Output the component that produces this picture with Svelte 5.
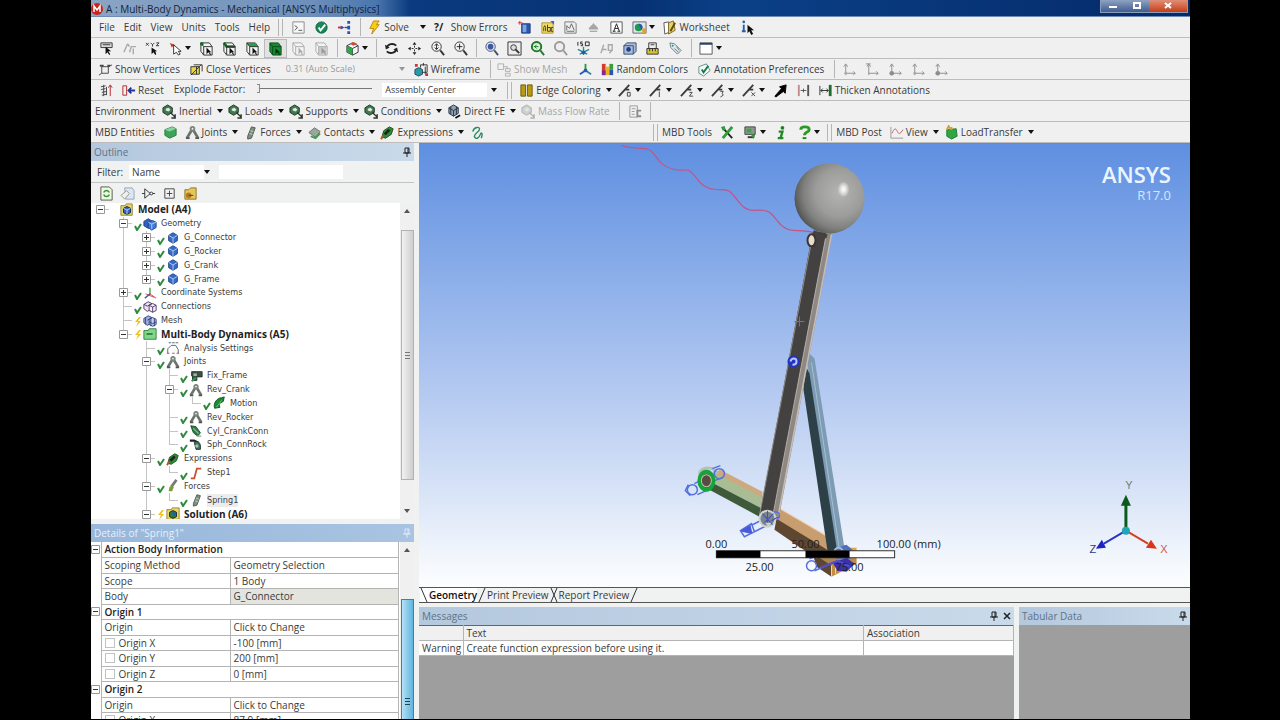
<script lang="ts">
	type Item = {
		kind: 'menu' | 'tool' | 'cmd' | 'split' | 'caret' | 'sep' | 'grip' | 'label' | 'scale' | 'explode' | 'center';
		icon?: string;
		text?: string;
		drop?: boolean;
		off?: boolean;
		on?: boolean;
	};

	const menu = (text: string): Item => ({ kind: 'menu', text });
	const tool = (icon: string, on = false): Item => ({ kind: 'tool', icon, on });
	const cmd = (icon: string, text: string, off = false): Item => ({ kind: 'cmd', icon, text, off });
	const drop = (icon: string, text: string): Item => ({ kind: 'cmd', icon, text, drop: true });
	const split = (icon: string): Item => ({ kind: 'split', icon });
	const label = (text: string): Item => ({ kind: 'label', text });
	const sep: Item = { kind: 'sep' };
	const grip: Item = { kind: 'grip' };

	const cube = (fill: string, line = '#222') =>
		`<path d="M2 5l6-3 6 3v7l-6 3-6-3z" fill="${fill}" stroke="${line}"/><path d="M2 5l6 3 6-3M8 8v7" fill="none" stroke="${line}"/>`;
	const selectBox = (faces: string, line = '#2c352f', pointer = '#111') =>
		`<path d="M2 2h9l3 4v9H5L2 11z" fill="#f4f4f4" stroke="${line}"/>${faces}<path d="M2 2l3 4h9M5 6v9" fill="none" stroke="${line}"/><path d="M8 7v7l2-2 2 3 1-1-2-2h2z" fill="${pointer}"/>`;
	const lens = (line: string, fill: string, inner = '') =>
		`<circle cx="7" cy="6" r="5" fill="${fill}" stroke="${line}"/><path d="M11 10l4 5" stroke="${line}" stroke-width="2"/>${inner}`;
	const load = (fill: string, line: string) =>
		`<path d="M1 4l5-3 5 3v5l-5 3-5-3z" fill="${fill}" stroke="${line}"/><path d="M4 5l3-1 2 2-2 2-3-1z" fill="#dfe8e1"/><path d="M9 9l5 5M14 11v4h-4" stroke="${line}" fill="none" stroke-width="1.5"/>`;
	const edge = (n: string) =>
		`<path d="M1 14L12 2M7 7h5" stroke="#3d3d3d" stroke-width="2" fill="none"/><path d="${n}" stroke="#444" fill="none"/>`;
	const axis = (extra: string) =>
		`<path d="M4 14V3M2 5l2-3 2 3M4 12h10M12 10l2 2-2 2" stroke="#8d8d8d" fill="none"/>${extra}`;
	const legs = `<path d="M2 14L8 4l6 10" stroke="#6b756d" stroke-width="3" fill="none"/><circle cx="8" cy="4" r="3" fill="#7d857e"/><circle cx="8" cy="4" r="1" fill="#eee"/><path d="M1 14h4M11 14h4" stroke="#555" stroke-width="2"/>`;
	const spring = `<path d="M5 12l4-10 4 1-4 11-4 1z" fill="#7e8f82" stroke="#4c5a50"/><path d="M8 6l3 1M7 9l3 1" stroke="#c9d5cb"/>`;
	const pen = `<path d="M2 13l2-7 6-4 4 2-2 6-6 4z" fill="#2f8a37" stroke="#1c5322"/><path d="M5 10l5-5" stroke="#222" stroke-width="3"/><path d="M1 15l3-4" stroke="#a55a2c" stroke-width="2"/>`;

	const icons: Record<string, string> = {
		command: '<path d="M2 2h12v12H2z" fill="#f7f7f7" stroke="#8a8a8a"/><path d="M4 6l3 2-3 3M8 11h4" stroke="#555" fill="none"/>',
		ok: '<circle cx="8" cy="8" r="6" fill="#148a55" stroke="#0c5f45"/><path d="M5 8l2 3 5-6" stroke="#fff" stroke-width="2" fill="none"/>',
		branch: '<path d="M1 8h5" stroke="#c33" stroke-width="2"/><path d="M4 6l4 2-4 2z" fill="#2b51b5"/><path d="M8 8h4" stroke="#2b51b5" stroke-width="1.5"/><path d="M11 1h3v3h-3zM11 6h3v4h-3zM11 12h3v3h-3z" fill="#2b51b5"/>',
		solve: '<path d="M7 1h6l-3 4h3l-8 10 2-6H3z" fill="#f5cd1a" stroke="#b98a0b"/>',
		errors: '<text x="0" y="12" font-size="11" font-weight="bold" fill="#222">?/</text>',
		comment: '<path d="M5 4h9v10H5z" fill="#2c56ad" stroke="#1d3c80"/><path d="M6 5h4v8H6z" fill="#7ea3de"/><path d="M1 3h5M3 1v4" stroke="#c33"/>',
		abc: '<path d="M2 3h12v11H2z" fill="#f2dd6b" stroke="#ad9432"/><path d="M4 12V8l1-2 1 2v4M8 5v7h3V8H8M14 8h-2v4h2" stroke="#433a14" fill="none"/><path d="M11 1h4v4z" fill="#2f6fb5"/>',
		figure: '<path d="M2 2h10l2 2v10H2z" fill="#eee" stroke="#777"/><path d="M4 11V6l3 3 2-5 3 7M4 12h8" stroke="#666" fill="none"/>',
		drop: '<path d="M8 3c-1 3-5 4-5 7h10c0-3-4-4-5-7z" fill="#a6a6a6"/><path d="M4 12h8" stroke="#8b8b8b"/>',
		textA: '<path d="M2 2h12v12H2z" fill="#fdfdfd" stroke="#555"/><path d="M5 12l3-8 3 8M6 9h4M4 12h3M9 12h3" stroke="#222" fill="none"/>',
		image: '<path d="M1 2h14v12H1z" fill="#dfe4e8" stroke="#667"/><circle cx="7" cy="8" r="4" fill="#1b9a50"/><path d="M7 4a4 4 0 0 1 3 7z" fill="#2c56ad"/><path d="M11 9h4v5h-4z" fill="#e0a322"/>',
		sheet: '<path d="M2 3l5-1 1 11-5 2z" fill="#fff" stroke="#555"/><path d="M7 3l5-2 2 10-7 4z" fill="#e9d06a" stroke="#7c6a22"/><path d="M14 3L9 12" stroke="#5f4a13" stroke-width="2"/>',
		infoSel: '<path d="M4 5v7M2 12h4M3 6h2" stroke="#2462a5" stroke-width="2"/><circle cx="4" cy="2" r="1.4" fill="#2462a5"/><path d="M8 5v9l2-2 2 4 2-1-2-4h3z" fill="#111"/>',

		pickFilter: '<path d="M2 2h12v5H2z" fill="#ddd" stroke="#333"/><path d="M4 4h8" stroke="#333"/><path d="M7 6v8l2-2 2 3 1-1-2-3h3z" fill="#111"/>',
		pickOff: '<path d="M2 12l4-9M6 3l2 3M8 12l2-6h5M12 8v6" stroke="#a9a9a9" stroke-width="1.5" fill="none"/>',
		pickXyz: '<path d="M1 2l3 3M4 2L1 5M6 2l2 2 2-2M8 4v2M12 2h3l-3 3h3" stroke="#333" fill="none"/><path d="M7 7v7l2-2 2 3 1-1-1-3h2z" fill="#111"/>',
		pointer: '<path d="M2 2l5 2-3 3z" fill="#c23b2a"/><path d="M6 4v10l3-2 2 3 2-1-2-3h3z" fill="#fff" stroke="#333"/>',
		selVertex: selectBox('<circle cx="3" cy="3" r="2" fill="#187a2b"/>'),
		selEdge: selectBox('<path d="M2 2l3 4h9" stroke="#187a2b" stroke-width="3" fill="none"/>'),
		selFace: selectBox('<path d="M2 2h9l3 4H5z" fill="#2aa043"/>'),
		selBody: '<path d="M2 2h9l3 4v9H5L2 11z" fill="#178a32" stroke="#0b4f1a"/><path d="M2 2l3 4h9M5 6v9" fill="none" stroke="#0b4f1a"/><path d="M8 8v6l2-2 2 3 1-1-2-2h2z" fill="#052c0d"/>',
		selOff: selectBox('', '#aaa', '#aaa'),
		selOff2: selectBox('<path d="M5 6h9v9H5z" fill="#ccc"/>', '#aaa', '#999'),
		extend: cube('#f4f4f4', '#334') + '<path d="M2 5l6 3v7l-6-3z" fill="#2ba843"/><path d="M5 3l4-2 4 2-4 2z" fill="#d34a35"/>',
		rotate: '<path d="M3 7c1-4 7-5 10-2M13 9c-1 4-7 5-10 2" stroke="#222" stroke-width="2" fill="none"/><path d="M1 4l1 5 4-2zM15 12l-1-5-4 2z" fill="#222"/>',
		pan: '<path d="M8 1l2 3H6zM8 15l2-3H6zM1 8l3-2v4zM15 8l-3-2v4z" fill="#222"/><path d="M8 5v2M8 9v2M5 8h2M9 8h2" stroke="#222"/>',
		zoom: lens('#333', '#f3f3f3', '<path d="M7 3v6M5 5l2-2 2 2M5 7l2 2 2-2" stroke="#222" fill="none"/>'),
		zoomIn: lens('#333', '#f3f3f3', '<path d="M7 3v6M4 6h6" stroke="#222"/>'),
		zoomFit: lens('#44506b', '#dfe6f3', '<circle cx="7" cy="6" r="3" fill="#3d56a5"/>'),
		zoomBox: '<path d="M1 1h14v14H1z" fill="#ececec" stroke="#333"/><circle cx="7" cy="7" r="3" fill="#ddd" stroke="#333"/><path d="M9 9l4 4" stroke="#333" stroke-width="2"/>',
		zoomPrev: lens('#1f7a2c', '#d8f1da', '<circle cx="7" cy="6" r="5" fill="none" stroke="#1f7a2c" stroke-width="2"/><path d="M4 6h5M7 4L5 6l2 2" stroke="#1f7a2c" fill="none"/>'),
		zoomNext: lens('#9c9c9c', '#eee', '<circle cx="7" cy="6" r="5" fill="none" stroke="#9c9c9c" stroke-width="2"/>'),
		iso: '<path d="M2 1v4M7 1H5v2h2v2H5M10 1h4v4h-4z" stroke="#222" fill="none"/><path d="M8 6v9M2 9l6 3 6-3M4 14l4-2 4 2" stroke="#2a8c8f" stroke-width="1.5" fill="none"/><circle cx="8" cy="12" r="2" fill="#2c56ad"/>',
		lookAt: '<path d="M2 13L5 4M4 9h4M10 4h4v6h-4zM11 13l3-3" stroke="#a9a9a9" stroke-width="1.5" fill="none"/>',
		views: '<path d="M2 5l3-3h10v9l-3 3H2z" fill="#a9bede" stroke="#3b4a66"/><path d="M2 5h10v9" stroke="#3b4a66" fill="none"/><circle cx="7" cy="9" r="2.5" fill="#1f3f86"/>',
		ruler: '<path d="M4 2h8v6H4z" fill="#eee" stroke="#333"/><path d="M2 8h12v6H2z" fill="#d6c33c" stroke="#333"/><path d="M5 8v3M8 8v3M11 8v3M6 4h4" stroke="#333"/>',
		tags: '<path d="M2 2l5 1 7 7-4 4-7-7z" fill="#dfe8ec" stroke="#6b7f88"/><circle cx="5" cy="5" r="1" fill="#2a8c8f"/><path d="M7 8l4 4M9 6l3 4" stroke="#6b7f88"/>',
		layout: '<path d="M1 2h13v12H1z" fill="#fff" stroke="#555"/><path d="M1 3h13" stroke="#27407a" stroke-width="2"/>',

		vertices: '<path d="M4 12V5h7v7zM1 14l3-2M11 5l4-2" fill="none" stroke="#444"/><path d="M2 4h4M10 4h3" stroke="#444" stroke-width="2"/>',
		closeVertices: '<path d="M2 5h9v8H2z" fill="#e7d74d" stroke="#333"/><path d="M5 3h9v7M2 14L13 3M8 5v8" fill="none" stroke="#333"/>',
		wireframe: '<path d="M1 8l4-2 4 2v5l-4 2-4-2z" fill="#2c9aa0" stroke="#1a4c66"/><path d="M7 3h7v8H9M7 3v3M10 1v3M12 5v8" stroke="#333" fill="none"/><path d="M1 2h3v3H1zM12 12h3v3h-3z" fill="#c33"/>',
		mesh: '<path d="M1 2h6v6H1zM9 7h5v3H9zM9 12h5v3H9zM7 5h4v2" fill="none" stroke="#b0b0b0"/>',
		triad: '<path d="M8 9V2" stroke="#2f9c3a" stroke-width="2"/><path d="M8 9l-6 4" stroke="#2957c2" stroke-width="2"/><path d="M8 9l6 4" stroke="#2a8c8f" stroke-width="2"/><circle cx="8" cy="9" r="2" fill="#2957c2"/>',
		colors: '<path d="M2 2h4v12H2z" fill="#d43c2c"/><path d="M6 5h4v9H6z" fill="#e8b51c"/><path d="M10 2h4v6h-4z" fill="#3c9c3c"/><path d="M10 8h4v6h-4z" fill="#2c56ad"/><path d="M2 9h4v5H2z" fill="#7b2ca5"/>',
		prefs: '<path d="M2 5l8-3 4 7-7 6-5-3z" fill="#f3f8f8" stroke="#5f8d8f"/><path d="M5 8l2 3 5-7" stroke="#167c3a" stroke-width="2" fill="none"/>',
		ax1: axis('<circle cx="4" cy="12" r="1.5" fill="#aaa"/>'),
		ax2: axis('<path d="M1 2h5" stroke="#8d8d8d"/>'),
		ax3: axis('<circle cx="4" cy="12" r="2.5" fill="#8d8d8d"/>'),

		explode: '<path d="M2 4l5-1M2 7l5-1M3 10l5-1M3 13l5-1M5 2v12M8 4v9" stroke="#444" fill="none"/><path d="M12 14V3M10 5l2-3 2 3" stroke="#b3262e" fill="none"/>',
		reset: '<path d="M2 3h4v10H2z" fill="none" stroke="#b3262e"/><path d="M15 8H8M11 5L8 8l3 3" stroke="#24349a" stroke-width="2" fill="none"/>',
		edges: '<path d="M2 2h5v12H2zM9 2h5v12H9z" fill="#b99a14" stroke="#6f5a05"/>',
		edge0: edge('M10 10h3v4h-3z'),
		edge1: edge('M11 9v6'),
		edge2: edge('M10 10h3l-3 4h4'),
		edge3: edge('M10 9h3l-1 2 1 2-3 2'),
		edgeX: edge('M10 10l4 4M14 10l-4 4'),
		arrowBig: '<path d="M14 2L7 4l2 2-7 8 1 1 8-6 2 2z" fill="#000" stroke="#000"/>',
		thin: '<path d="M3 2v12" stroke="#c58a8a" stroke-width="2"/><path d="M13 2v12" stroke="#555" stroke-width="2"/><path d="M5 8h6M8 6v4" stroke="#555"/>',
		thick: '<path d="M2 3v10" stroke="#333"/><path d="M13 2v12" stroke="#1a6f2a" stroke-width="3"/><path d="M3 8h8M5 6L3 8l2 2M9 6l2 2-2 2" stroke="#333" fill="none"/>',

		load: load('#3d7a4c', '#27332a'),
		fe: '<path d="M2 4l5-3 5 3v6l-5 3-5-3z" fill="#8fa3b8" stroke="#2a3440"/><path d="M2 4l5 3 5-3M7 7v6M4 3v8M10 3v8" fill="none" stroke="#2a3440"/><path d="M9 15l5-3" stroke="#111" stroke-width="2"/>',
		massFlow: load('#cfcfcf', '#b0b0b0'),
		copy: '<path d="M2 2h8v12H2zM4 5h4M4 8h3M4 11h3" fill="none" stroke="#999"/><path d="M14 7h-4v6h4" stroke="#8b8b8b" stroke-width="2" fill="none"/>',
		mbd: '<path d="M2 5l8-3 4 2v7l-7 3-5-3z" fill="#3aa45b" stroke="#2b7d45"/><path d="M2 5l5 2 7-3-4-2z" fill="#8ad3a0"/>',
		joint: legs,
		force: spring,
		contact: '<path d="M2 8l6-5 6 4-5 6z" fill="#9aa79c" stroke="#66746a"/><path d="M4 12l5 2 5-5" stroke="#3e9b4d" stroke-width="2" fill="none"/>',
		expression: pen,
		curve: '<path d="M3 7c1-5 8-6 7-2-1 3-7 5-5 8s5 0 6-3 3-1 1 4" fill="none" stroke="#2d8b63" stroke-width="1.5"/>',
		tools: '<path d="M3 3l10 11" stroke="#222" stroke-width="2"/><path d="M13 2L3 14" stroke="#2d9b38" stroke-width="3"/><path d="M1 2l4-1 1 4-3 1z" fill="#2d9b38"/>',
		monitor: '<path d="M2 2h11v8H2z" fill="#8d988e" stroke="#444"/><path d="M4 4h5v4H4z" fill="#3aa44d"/><path d="M5 12h7v2H5z" fill="#333"/><path d="M8 9l5 2-2 4z" fill="#2d9b38"/>',
		info: '<circle cx="9" cy="3" r="2" fill="#1f7d25"/><path d="M5 7h4l-2 7M4 14h6" stroke="#1f8a25" stroke-width="2.5" fill="none"/>',
		help: '<path d="M4 5c0-4 9-4 9 0 0 3-5 2-5 6" stroke="#2a9a24" stroke-width="3" fill="none"/><path d="M6 13h4v2H6z" fill="#1f7d25"/>',
		chart: '<path d="M2 2v12h13" stroke="#999" fill="none"/><path d="M3 9c3-6 4-6 6-2s3 2 6-2" stroke="#bd5d60" fill="none"/>',
		transfer: '<path d="M3 5l10-1 1 8-6 3-5-3z" fill="#2fa643" stroke="#1e7a2e"/><path d="M3 5l2-4 2 4M8 5V2" stroke="#d9a32a" stroke-width="2" fill="none"/>',

		refresh: '<path d="M2 1h9l3 3v11H2z" fill="#f2f6e2" stroke="#555"/><path d="M5 7c1-3 5-3 6 0M11 9c-1 3-5 3-6 0" stroke="#2a9a34" stroke-width="1.5" fill="none"/>',
		tag: '<path d="M5 2h8l2 3v9H6z" fill="#dce5f3" stroke="#98a5b8"/><path d="M1 10l6-5 3 3-5 6z" fill="#eee" stroke="#999"/>',
		gate: '<path d="M1 8h3M4 3v10l6-5zM10 8h5" fill="none" stroke="#333"/><circle cx="11" cy="8" r="1.5" fill="#fff" stroke="#333"/>',
		expandAll: '<path d="M3 3h10v10H3zM8 5v6M5 8h6" fill="none" stroke="#444"/>',
		folder: '<path d="M2 4h4l2-2h6v12H2z" fill="#e6c65a" stroke="#8c7426"/><circle cx="6" cy="10" r="3" fill="#b37b25"/><path d="M6 10h5" stroke="#553a10"/>',

		model: '<path d="M1 3h5l1-2h7v13H1z" fill="#ead36b" stroke="#8c7f3a"/><path d="M4 6l4-2 4 2v5l-4 2-4-2z" fill="#3264c0" stroke="#123"/><path d="M4 6l4 2 4-2M8 8v5" stroke="#c2d8f5" fill="none"/>',
		geometry: '<path d="M1 5l5-3 5 3v5l-5 3-5-3z" fill="#2f61bd" stroke="#1d3f85"/><path d="M6 6l5-2 4 2v6l-5 3-4-3z" fill="#3f7bdc" stroke="#1d3f85"/><path d="M6 6l4 2 5-2M10 8v6" stroke="#bcd2f4" fill="none"/>',
		part: '<path d="M3 5l5-3 5 3v6l-5 3-5-3z" fill="#356bc9" stroke="#1d3f85"/><path d="M3 5l5 3 5-3M8 8v6" stroke="#bcd2f4" fill="none"/>',
		coords: '<path d="M8 9V2" stroke="#2f9c3a" stroke-width="1.5"/><path d="M8 9l-6 5" stroke="#2957c2" stroke-width="1.5"/><path d="M8 9l7 5M3 9l10 4" stroke="#c33b3b"/>',
		connections: '<path d="M1 5l5-3 4 2v6l-5 3-4-3z" fill="#e9e2ef" stroke="#4b2f66"/><path d="M7 6l4-2 4 2v6l-4 2-4-2z" fill="#f4eef8" stroke="#4b2f66"/><path d="M1 5l4 2 5-3M7 6l4 2 4-2M11 8v6" stroke="#4b2f66" fill="none"/>',
		meshTree: '<path d="M1 5l5-3 4 2v6l-5 3-4-3z" fill="#a4b4dd" stroke="#2c3c77"/><path d="M7 6l4-2 4 2v6l-4 2-4-2z" fill="#c4d0ee" stroke="#2c3c77"/><path d="M3 4v8M5 7l5-3M7 9l4 2 4-2M9 5v9M13 5v9" stroke="#2c3c77" fill="none"/>',
		dynamics: '<path d="M1 4h5l1-2h8v12H1z" fill="#7fd88a" stroke="#2f7a3a"/><path d="M4 8h7" stroke="#185a22" stroke-width="1.5"/>',
		settings: '<path d="M3 2h3M7 2h3M11 2h3M2 14V9l4-4h5l3 5v4" stroke="#4a5a60" fill="none"/><path d="M1 14h3M7 14h3M12 14h3" stroke="#b44" />',
		fix: '<path d="M3 3h12v6H9v4H4V8H3z" fill="#3c5244" stroke="#22332a"/><path d="M5 5h4v3H5z" fill="#9bb7a4"/><path d="M3 14l5-4" stroke="#2f9c4a" stroke-width="2"/>',
		motion: '<path d="M3 14c-2-6 3-12 8-12l3-1-1 5-5 3 1 4z" fill="#1d8a31" stroke="#0d4f1b"/><path d="M5 13l6-8" stroke="#6fce7f"/>',
		cylinder: '<path d="M2 2l6 1 5 7-3 4-5-4z" fill="#2b7d45" stroke="#1b4b2b"/><path d="M9 14h5M5 5l6 6" stroke="#9fb5a6" stroke-width="1.5"/>',
		spherical: '<path d="M1 3h5l4 2" stroke="#222" stroke-width="2.5" fill="none"/><path d="M6 5c4-3 8 0 7 8H8z" fill="#3f6b58" stroke="#20382e"/><circle cx="9" cy="9" r="2" fill="#a9c2b5"/>',
		step: '<path d="M2 14h4L9 3h5" stroke="#c4532b" stroke-width="2" fill="none"/>',
		forces: '<path d="M6 9l6-8" stroke="#777" stroke-width="3"/><path d="M3 14l1-5 3-2 2 2-2 5z" fill="#7f9a3a"/>',
		solution: '<path d="M1 3h5l1-2h8v13H1z" fill="#f0d75a" stroke="#8c7f3a"/><path d="M4 6l4-2 4 2v5l-4 2-4-2z" fill="#2b7d45" stroke="#123"/><circle cx="9" cy="8" r="2" fill="#2c56ad"/>'
	};

	const bars: Item[][] = [
		[
			...['File', 'Edit', 'View', 'Units', 'Tools', 'Help'].map(menu),
			grip,
			tool('command'),
			tool('ok'),
			tool('branch'),
			sep,
			cmd('solve', 'Solve'),
			{ kind: 'caret' },
			cmd('errors', 'Show Errors'),
			...['comment', 'abc', 'figure', 'drop', 'textA'].map((i) => tool(i)),
			split('image'),
			cmd('sheet', 'Worksheet'),
			tool('infoSel')
		],
		[
			...['pickFilter', 'pickOff', 'pickXyz'].map((i) => tool(i)),
			split('pointer'),
			tool('selVertex'),
			tool('selEdge'),
			tool('selFace'),
			tool('selBody', true),
			tool('selOff'),
			tool('selOff2'),
			sep,
			split('extend'),
			sep,
			...['rotate', 'pan', 'zoom', 'zoomIn'].map((i) => tool(i)),
			sep,
			...['zoomFit', 'zoomBox', 'zoomPrev', 'zoomNext', 'iso', 'lookAt', 'views', 'ruler', 'tags'].map((i) => tool(i)),
			sep,
			split('layout')
		],
		[
			cmd('vertices', 'Show Vertices'),
			cmd('closeVertices', 'Close Vertices'),
			{ kind: 'scale' },
			cmd('wireframe', 'Wireframe'),
			sep,
			cmd('mesh', 'Show Mesh', true),
			tool('triad'),
			cmd('colors', 'Random Colors'),
			cmd('prefs', 'Annotation Preferences'),
			sep,
			...['ax1', 'ax2', 'ax3', 'ax1', 'ax3'].map((i) => tool(i))
		],
		[
			tool('explode'),
			cmd('reset', 'Reset'),
			{ kind: 'explode' },
			{ kind: 'center' },
			grip,
			drop('edges', 'Edge Coloring'),
			...['edge0', 'edge1', 'edge2', 'edge3', 'edgeX'].map(split),
			tool('arrowBig'),
			tool('thin'),
			cmd('thick', 'Thicken Annotations')
		],
		[
			label('Environment'),
			drop('load', 'Inertial'),
			drop('load', 'Loads'),
			drop('load', 'Supports'),
			drop('load', 'Conditions'),
			drop('fe', 'Direct FE'),
			cmd('massFlow', 'Mass Flow Rate', true),
			sep,
			tool('copy'),
			sep
		]
	];

	const entities: Item[] = [
		label('MBD Entities'),
		tool('mbd'),
		drop('joint', 'Joints'),
		drop('force', 'Forces'),
		drop('contact', 'Contacts'),
		drop('expression', 'Expressions'),
		tool('curve')
	];
	const mbdTools: Item[] = [
		grip,
		label('MBD Tools'),
		tool('tools'),
		split('monitor'),
		tool('info'),
		split('help'),
		grip,
		label('MBD Post'),
		drop('chart', 'View'),
		drop('transfer', 'LoadTransfer')
	];

	type Node = { d: number; name: string; icon: string; box?: '+' | '-'; mark?: 'check' | 'bolt'; bold?: boolean; selected?: boolean };
	const nodes: Node[] = [
		{ d: 0, name: 'Model (A4)', icon: 'model', box: '-', bold: true },
		{ d: 1, name: 'Geometry', icon: 'geometry', box: '-', mark: 'check' },
		{ d: 2, name: 'G_Connector', icon: 'part', box: '+', mark: 'check' },
		{ d: 2, name: 'G_Rocker', icon: 'part', box: '+', mark: 'check' },
		{ d: 2, name: 'G_Crank', icon: 'part', box: '+', mark: 'check' },
		{ d: 2, name: 'G_Frame', icon: 'part', box: '+', mark: 'check' },
		{ d: 1, name: 'Coordinate Systems', icon: 'coords', box: '+', mark: 'check' },
		{ d: 1, name: 'Connections', icon: 'connections', mark: 'check' },
		{ d: 1, name: 'Mesh', icon: 'meshTree', mark: 'bolt' },
		{ d: 1, name: 'Multi-Body Dynamics (A5)', icon: 'dynamics', box: '-', mark: 'bolt', bold: true },
		{ d: 2, name: 'Analysis Settings', icon: 'settings', mark: 'check' },
		{ d: 2, name: 'Joints', icon: 'joint', box: '-', mark: 'check' },
		{ d: 3, name: 'Fix_Frame', icon: 'fix', mark: 'check' },
		{ d: 3, name: 'Rev_Crank', icon: 'joint', box: '-', mark: 'check' },
		{ d: 4, name: 'Motion', icon: 'motion', mark: 'check' },
		{ d: 3, name: 'Rev_Rocker', icon: 'joint', mark: 'check' },
		{ d: 3, name: 'Cyl_CrankConn', icon: 'cylinder', mark: 'check' },
		{ d: 3, name: 'Sph_ConnRock', icon: 'spherical', mark: 'check' },
		{ d: 2, name: 'Expressions', icon: 'expression', box: '-', mark: 'check' },
		{ d: 3, name: 'Step1', icon: 'step', mark: 'check' },
		{ d: 2, name: 'Forces', icon: 'forces', box: '-', mark: 'check' },
		{ d: 3, name: 'Spring1', icon: 'force', mark: 'check', selected: true },
		{ d: 2, name: 'Solution (A6)', icon: 'solution', box: '-', mark: 'bolt', bold: true }
	];

	// true when another node follows at this depth before the branch closes
	function continues(index: number, depth: number) {
		for (const n of nodes.slice(index + 1)) {
			if (n.d < depth) return false;
			if (n.d === depth) return true;
		}
		return false;
	}

	type Row = { group?: string; name?: string; value?: string; check?: boolean; dim?: boolean };
	const details: Row[] = [
		{ group: 'Action Body Information' },
		{ name: 'Scoping Method', value: 'Geometry Selection' },
		{ name: 'Scope', value: '1 Body' },
		{ name: 'Body', value: 'G_Connector', dim: true },
		{ group: 'Origin 1' },
		{ name: 'Origin', value: 'Click to Change' },
		{ name: 'Origin X', value: '-100 [mm]', check: true },
		{ name: 'Origin Y', value: '200 [mm]', check: true },
		{ name: 'Origin Z', value: '0 [mm]', check: true },
		{ group: 'Origin 2' },
		{ name: 'Origin', value: 'Click to Change' },
		{ name: 'Origin X', value: '87.9 [mm]', check: true }
	];

	let tab = $state('Geometry');
	let explode = $state(0);
	let filter = $state('');
</script>

{#snippet glyph(name: string)}
	<svg class="icon" viewBox="0 0 16 16" aria-hidden="true">{@html icons[name]}</svg>
{/snippet}

{#snippet caret()}
	<svg class="caret" viewBox="0 0 6 4" aria-hidden="true"><path d="M0 0h6L3 4z" fill="#111" /></svg>
{/snippet}

{#snippet pin()}
	<svg class="pin" viewBox="0 0 8 10" aria-hidden="true">
		<path d="M2 1h4v5H2zM5 1v5M0 6h8M4 6v4" fill="none" stroke="currentColor" />
	</svg>
{/snippet}

{#snippet toolbar(items: Item[])}
	{#each items as item}
		{#if item.kind === 'menu'}
			<button class="menu">{item.text}</button>
		{:else if item.kind === 'tool'}
			<button class="tool" class:on={item.on} aria-label={item.icon}>{@render glyph(item.icon)}</button>
		{:else if item.kind === 'split'}
			<button class="split" aria-label={item.icon}>{@render glyph(item.icon)}{@render caret()}</button>
		{:else if item.kind === 'caret'}
			<button class="drop-only" aria-label="Solve options">{@render caret()}</button>
		{:else if item.kind === 'cmd'}
			<button class="cmd" class:drop={item.drop} disabled={item.off}>
				{@render glyph(item.icon)}<span>{item.text}</span>
				{#if item.drop}{@render caret()}{/if}
			</button>
		{:else if item.kind === 'label'}
			<span class="label">{item.text}</span>
		{:else if item.kind === 'scale'}
			<div class="pick scale">
				<select aria-label="Vertex scale" disabled><option>0.31 (Auto Scale)</option></select>
				{@render caret()}
			</div>
		{:else if item.kind === 'center'}
			<div class="pick center">
				<select aria-label="Explode center"><option>Assembly Center</option></select>
				{@render caret()}
			</div>
		{:else if item.kind === 'explode'}
			<label class="explode">Explode Factor: <input type="range" min="0" max="100" bind:value={explode} /></label>
		{:else}
			<i class={item.kind}></i>
		{/if}
	{/each}
{/snippet}

<div class="window">
	<header class="title">
		<svg class="logo" viewBox="0 0 12 14" aria-hidden="true">
			<circle cx="6" cy="7" r="6" fill="#c8231c" />
			<path d="M3 10V4l3 4 3-4v6" fill="none" stroke="#fff" stroke-width="1.5" />
		</svg>
		<h1>A : Multi-Body Dynamics - Mechanical [ANSYS Multiphysics]</h1>
		<div class="window-buttons">
			<button aria-label="Minimize"><svg viewBox="0 0 12 10"><path d="M2 6h8" stroke="#fff" stroke-width="2" /></svg></button>
			<button aria-label="Restore"><svg viewBox="0 0 12 10"><path d="M3 2h6v5H3z" fill="none" stroke="#fff" stroke-width="2" /></svg></button>
			<button class="close" aria-label="Close"><svg viewBox="0 0 12 10"><path d="M3 2l6 5M9 2L3 7" stroke="#fff" stroke-width="2" /></svg></button>
		</div>
	</header>

	{#each bars as bar}
		<div class="bar">{@render toolbar(bar)}</div>
	{/each}
	<div class="bar">
		<div class="band">{@render toolbar(entities)}</div>
		{@render toolbar(mbdTools)}
	</div>

	<main>
		<aside>
			<section class="outline">
				<h2>Outline <button aria-label="Pin outline">{@render pin()}</button></h2>
				<div class="filter">
					<label for="filter-by">Filter:</label>
					<div class="pick">
						<select id="filter-by"><option>Name</option></select>
						{@render caret()}
					</div>
					<input type="text" aria-label="Filter text" bind:value={filter} />
				</div>
				<div class="tree-tools">
					{#each ['refresh', 'tag', 'gate', 'expandAll', 'folder'] as name}
						<button aria-label={name}>{@render glyph(name)}</button>
					{/each}
				</div>
				<div class="tree-box">
					<ul class="tree">
						{#each nodes as node, i}
							<li>
								{#each { length: node.d } as _, level}
									<i class="guide" class:line={level > 0 && continues(i, level)}></i>
								{/each}
								<i class="guide own" class:line={continues(i, node.d)} class:up={node.d > 0}>
									{#if node.box}
										<svg class="box" viewBox="0 0 9 9">
											<path d="M0.5 0.5h8v8h-8z" fill="#fff" stroke="#999" />
											<path d={node.box === '+' ? 'M2 4.5h5M4.5 2v5' : 'M2 4.5h5'} stroke="#333" />
										</svg>
									{/if}
								</i>
								<svg class="mark" viewBox="0 0 8 14" aria-hidden="true">
									{#if node.mark === 'check'}
										<path d="M1 9l2 4 4-6" fill="none" stroke="#2f8a3d" stroke-width="2" />
									{:else if node.mark === 'bolt'}
										<path d="M5 3L1 8h3l-2 5 5-6H4l3-4z" fill="#f0c01e" />
									{/if}
								</svg>
								{@render glyph(node.icon)}
								<span class:bold={node.bold} class:selected={node.selected}>{node.name}</span>
							</li>
						{/each}
					</ul>
					<div class="scroll">
						<svg viewBox="0 0 6 4"><path d="M0 4h6L3 0z" fill="#555" /></svg>
						<div class="thumb"></div>
						<svg viewBox="0 0 6 4"><path d="M0 0h6L3 4z" fill="#555" /></svg>
					</div>
				</div>
			</section>

			<section class="details">
				<h2>Details of "Spring1" <button aria-label="Pin details">{@render pin()}</button></h2>
				<div class="details-box">
					<table>
						<colgroup><col class="gutter-col" /><col class="name-col" /><col /></colgroup>
						<tbody>
							{#each details as row}
								<tr>
									{#if row.group}
										<td class="gutter">
											<svg class="box" viewBox="0 0 9 9">
												<path d="M0.5 0.5h8v8h-8z" fill="#fff" stroke="#999" />
												<path d="M2 4.5h5" stroke="#333" />
											</svg>
										</td>
										<th colspan="2">{row.group}</th>
									{:else}
										<td class="gutter"></td>
										<td>
											{#if row.check}
												<label><input type="checkbox" />{row.name}</label>
											{:else}
												{row.name}
											{/if}
										</td>
										<td class:dim={row.dim}>{row.value}</td>
									{/if}
								</tr>
							{/each}
						</tbody>
					</table>
					<div class="scroll blue">
						<svg viewBox="0 0 6 4"><path d="M0 4h6L3 0z" fill="#555" /></svg>
						<div class="thumb"></div>
					</div>
				</div>
			</section>
		</aside>

		<div class="work">
			<svg class="scene" viewBox="419 143 770 444" preserveAspectRatio="xMidYMid slice" role="img" aria-label="Mechanism">
				<defs>
					<linearGradient id="sky" x1="0" y1="0" x2="0" y2="1">
						<stop offset="0" stop-color="#5f8fe1" />
						<stop offset="0.25" stop-color="#84a9e8" />
						<stop offset="0.5" stop-color="#abc3ef" />
						<stop offset="0.75" stop-color="#d2dff6" />
						<stop offset="0.92" stop-color="#f0f5fc" />
						<stop offset="1" stop-color="#fdfefe" />
					</linearGradient>
					<radialGradient id="ball" cx="0.64" cy="0.42" r="0.68">
						<stop offset="0" stop-color="#b4b4b3" />
						<stop offset="0.5" stop-color="#9c9c9a" />
						<stop offset="0.75" stop-color="#80807e" />
						<stop offset="0.9" stop-color="#626260" />
						<stop offset="1" stop-color="#4a4a48" />
					</radialGradient>
					<radialGradient id="shine">
						<stop offset="0" stop-color="#fff" />
						<stop offset="0.4" stop-color="#fff" stop-opacity="0.7" />
						<stop offset="1" stop-color="#fff" stop-opacity="0" />
					</radialGradient>
				</defs>
				<rect x="0" y="0" width="2000" height="143" fill="#5f8fe1" />
				<rect x="0" y="143" width="2000" height="444" fill="url(#sky)" />

				<!-- spring path -->
				<path
					d="M621 145c8 4 20 2 27 4 8 3 8 16 25 20 8 2 12 0 15 1 9 4 10 18 26 19 8 1 11-1 15 2 9 7 11 19 24 19 8 0 12-1 16 2 8 6 12 19 25 18 8 1 12 0 18 2"
					fill="none"
					stroke="#c25586"
					stroke-width="1.2"
				/>

				<!-- crank -->
				<path d="M713 470l49 25-2 12-50-26z" fill="#a9bd94" />
				<path d="M720 469l42 22v6l-48-25z" fill="#cda980" />
				<path d="M710 481l50 26-1 9-50-27z" fill="#3e5a3b" />
				<path d="M776 506l54 32 20 9-20 9-54-36z" fill="#c89d6f" />
				<path d="M776 518l54 33 4 12-6 3-54-37z" fill="#5e4630" />
				<path d="M776 506l50 29" stroke="#ead0ac" fill="none" />
				<path d="M813 556l18 9v11l-15-10z" fill="#5e4630" />
				<path d="M831 565l25-14v12l-25 13z" fill="#c18b43" />
				<path d="M831 565v11M835 563v10M840 560v10" stroke="#f1d7ad" />
				<path d="M816 555l21-13 19 8-25 15z" fill="#a98558" />
				<path d="M845 547h11v9h-11z" fill="#e0a53e" />

				<!-- rocker -->
				<path d="M808 352l6 6 30 190-8 6-29-190z" fill="#7d9bb3" />
				<path d="M811 362l28 188" stroke="#a6c0d2" />
				<path d="M805 365l4 8 28 180-9 4-25-168z" fill="#2d4047" />

				<!-- connector -->
				<path d="M823 232h9l-53 282-9 5z" fill="#8d8883" />
				<path d="M831 234l-53 280" stroke="#c7bdb2" stroke-width="1.5" />
				<path d="M812 232h14l-54 286-13-3z" fill="#444241" />
				<path d="M826 233l-54 284" stroke="#b5ada6" />
				<path d="M812 236l-53 279" stroke="#8e8a86" />
				<circle cx="829" cy="198" r="35" fill="url(#ball)" />
				<ellipse cx="843" cy="189" rx="6" ry="8" fill="url(#shine)" />
				<path d="M813 230l10 3 4 1-1 4h-14z" fill="#444241" />
				<ellipse cx="811" cy="240" rx="4" ry="6" fill="#e7ddcd" stroke="#3c3632" stroke-width="2" />
				<path d="M799 316v10M794 321h10" stroke="#5c76b5" />

				<!-- joint markers -->
				<circle cx="793" cy="361" r="6" fill="#2233c4" />
				<path d="M790 361c1-4 6-4 6 0s-4 3-4 3" fill="none" stroke="#b9c7f5" stroke-width="2" />
				<path d="M700 475c-4-7 12-12 17-2" fill="none" stroke="#b6c0b8" stroke-width="3" />
				<g fill="none" stroke="#5570dc" stroke-width="1.5">
					<circle cx="719" cy="473" r="5" />
					<circle cx="692" cy="489" r="5" />
					<path d="M712 468l8-3M714 480l8-3M694 483l10-5M697 494l9-4M688 484l-3 6 5 5" />
					<path d="M740 530l11-7 3 8-10 5zM740 530l9 2M752 524l14-7M754 531l14-7" />
					<circle cx="775" cy="515" r="4" />
					<circle cx="811" cy="565" r="5" />
					<path d="M809 558l14-6M814 570l14-6" />
				</g>
				<ellipse cx="706" cy="480" rx="7" ry="9" fill="#574b42" stroke="#12a53a" stroke-width="4" />
				<ellipse cx="706" cy="480" rx="5" ry="6" fill="none" stroke="#b3c9a4" />
				<path d="M740 530l10-6 2 9z" fill="#4a5ad6" />
				<circle cx="767" cy="518" r="8" fill="#7c858a" stroke="#cfd4d2" stroke-width="2" />
				<path d="M762 513l10 11M773 513l-9 9M767 510v15M771 520l7-4" stroke="#3f4fc0" />
				<path d="M765 522h6l-3 5z" fill="#c9d0d0" />
				<path d="M834 548l12-4 7 6-3 8h-14z" fill="#4d6ec2" />
				<circle cx="838" cy="551" r="4" fill="none" stroke="#9db8e4" stroke-width="2" />
				<path d="M832 562l14-5 8 6-8 8-9-1z" fill="#3c31a8" />
				<path d="M820 567l17-7 12 6" fill="none" stroke="#4e4fc6" stroke-width="2" />

				<!-- scale ruler -->
				<path d="M716 550h178v7H716z" fill="#fff" stroke="#333" />
				<path d="M716 550h44v7h-44zM805 550h44v7h-44z" fill="#000" />
				<g class="ruler-text">
					<text x="716" y="547" text-anchor="middle">0.00</text>
					<text x="805" y="547" text-anchor="middle">50.00</text>
					<text x="908" y="547" text-anchor="middle">100.00 (mm)</text>
					<text x="759" y="570" text-anchor="middle">25.00</text>
					<text x="849" y="570" text-anchor="middle">75.00</text>
				</g>

				<text class="brand" x="1170" y="183" text-anchor="end">ANSYS</text>
				<text class="release" x="1170" y="200" text-anchor="end">R17.0</text>

				<!-- triad -->
				<path d="M1125 530v-28" stroke="#0c5a1c" stroke-width="3" />
				<path d="M1125 494l5 11h-10z" fill="#0c5a1c" />
				<path d="M1125 530l-22 13" stroke="#2a36c4" stroke-width="2" />
				<path d="M1095 548l6-9 4 8z" fill="#1c22c8" />
				<path d="M1125 530l22 13" stroke="#d44024" stroke-width="2" />
				<path d="M1156 548l-6-9-5 8z" fill="#d8371b" />
				<circle cx="1125" cy="530" r="4" fill="#23a5b5" />
				<text class="axis y" x="1128" y="488" text-anchor="middle">Y</text>
				<text class="axis z" x="1092" y="552" text-anchor="middle">Z</text>
				<text class="axis x" x="1163" y="552" text-anchor="middle">X</text>
			</svg>

			<nav class="tabs">
				<svg viewBox="0 0 10 14"><path d="M1 0v14h9V0z" fill="#fff" /><path d="M2 0l6 14" stroke="#333" /></svg>
				{#each ['Geometry', 'Print Preview', 'Report Preview'] as name, i}
					<button class:active={tab === name} onclick={() => (tab = name)}>{name}</button>
					<svg viewBox="0 0 10 14">
						<path d="M8 0L2 14" stroke="#333" />
						{#if i === 1}<path d="M2 0l6 14" stroke="#333" />{/if}
					</svg>
				{/each}
			</nav>

			<div class="bottom">
				<section class="messages">
					<h2>
						Messages
						<span>
							<button aria-label="Pin messages">{@render pin()}</button>
							<button aria-label="Close messages">
								<svg class="pin" viewBox="0 0 8 10"><path d="M1 2l6 6M7 2L1 8" stroke="currentColor" stroke-width="1.5" /></svg>
							</button>
						</span>
					</h2>
					<table>
						<thead>
							<tr><th></th><th>Text</th><th>Association</th></tr>
						</thead>
						<tbody>
							<tr><td>Warning</td><td>Create function expression before using it.</td><td></td></tr>
						</tbody>
					</table>
				</section>
				<section class="tabular">
					<h2>Tabular Data <button aria-label="Pin tabular data">{@render pin()}</button></h2>
				</section>
			</div>
		</div>
	</main>
</div>

<style>
	:global(body) {
		background: #000;
	}
	.window {
		box-sizing: border-box;
		height: 100vh;
		margin: 0 90px 0 91px;
		padding-bottom: 1px;
		display: flex;
		flex-direction: column;
		overflow: hidden;
		background: #f0f1f1;
		background-clip: content-box;
		color: #3a3a3a;
		font: 10px/14px 'Open Sans', 'Noto Sans', sans-serif;
	}
	button,
	input,
	select {
		font: inherit;
		color: inherit;
		border: none;
		background: none;
		padding: 0;
		margin: 0;
	}
	button {
		display: flex;
		align-items: center;
		white-space: nowrap;
	}
	h1,
	h2 {
		margin: 0;
		font: inherit;
	}
	svg {
		flex: none;
	}
	.icon {
		width: 15px;
		height: 15px;
	}
	.caret {
		width: 6px;
		height: 4px;
	}
	.pin {
		display: block;
		width: 8px;
		height: 10px;
	}

	/* title bar */
	.title {
		flex: none;
		height: 17px;
		display: flex;
		align-items: center;
		gap: 3px;
		background: linear-gradient(90deg, #8ba5c4 0, #6d90bb 20%, #4a76ad 26%, #0b3a80 29%, #063273 50%, #0b4087 58%, #042a69 100%);
		box-shadow: inset 0 -1px #6d8cb4;
	}
	.title h1 {
		flex: 1;
		color: #15233a;
	}
	.logo {
		width: 12px;
		height: 14px;
	}
	.window-buttons {
		display: flex;
		align-self: flex-start;
		height: 12px;
		margin-right: 2px;
		border: 1px solid #8a9dbb;
		border-top: none;
	}
	.window-buttons button {
		width: 24px;
		justify-content: center;
		background: linear-gradient(#8fa3c2, #3f5d8f);
	}
	.window-buttons .close {
		width: 38px;
		background: linear-gradient(#e08f78, #c63d14);
	}
	.window-buttons svg {
		width: 12px;
		height: 10px;
	}

	/* toolbars */
	.bar {
		flex: none;
		box-sizing: border-box;
		height: 21px;
		padding-left: 4px;
		display: flex;
		align-items: center;
		border-bottom: 1px solid #bdbdbd;
		background: #f0f0f0;
	}
	.band {
		flex: 0 0 555px;
		display: flex;
		align-items: center;
	}
	.menu {
		padding: 0 4px;
		margin-right: 1px;
	}
	.tool {
		width: 23px;
		height: 19px;
		justify-content: center;
	}
	.tool.on {
		box-shadow: inset 0 0 0 1px #bbb;
		background: #e2e2e2;
	}
	.split {
		padding: 0 4px;
		gap: 2px;
	}
	.drop-only {
		width: 16px;
		justify-content: center;
	}
	.cmd {
		padding: 0 6px 0 3px;
		gap: 2px;
	}
	.cmd.drop {
		padding-right: 2px;
	}
	.cmd.drop .caret {
		margin-left: 3px;
	}
	.cmd:disabled {
		color: #a6a6a6;
	}
	.label {
		padding-right: 4px;
		white-space: nowrap;
	}
	.sep {
		width: 8px;
		height: 18px;
		background: linear-gradient(#b5b5b5, #b5b5b5) center / 1px 100% no-repeat;
	}
	.grip {
		box-sizing: border-box;
		width: 5px;
		height: 17px;
		margin: 0 4px 0 3px;
		border: solid #b5b5b5;
		border-width: 0 1px;
	}
	.pick {
		display: flex;
		align-items: center;
	}
	.pick select {
		appearance: none;
		width: 100%;
		height: 14px;
		padding-left: 3px;
		font-size: 9px;
		line-height: 14px;
		background: #fff;
	}
	.scale {
		width: 122px;
		margin: 0 6px;
	}
	.scale select {
		background: none;
		color: #9a9a9a;
		opacity: 1;
	}
	.scale .caret {
		opacity: 0.4;
	}
	.center {
		width: 115px;
		margin: 0 7px 0 10px;
	}
	.center .caret {
		margin-left: 4px;
	}
	.explode {
		display: flex;
		align-items: center;
		gap: 12px;
		padding-left: 4px;
		padding-bottom: 3px;
		white-space: nowrap;
	}
	.explode input {
		appearance: none;
		width: 115px;
		height: 10px;
		background: linear-gradient(#777, #777) center / 100% 1px no-repeat;
	}
	.explode input::-webkit-slider-thumb {
		appearance: none;
		width: 3px;
		height: 9px;
		border: 1px solid #888;
		border-left: none;
		background: #eee;
	}

	main {
		flex: 1;
		min-height: 0;
		display: grid;
		grid-template-columns: 323px 1fr;
		gap: 5px;
	}
	aside,
	.work {
		min-width: 0;
		min-height: 0;
		display: flex;
		flex-direction: column;
	}
	aside {
		gap: 5px;
	}
	h2 {
		flex: none;
		height: 18px;
		padding: 0 3px;
		display: flex;
		align-items: center;
		justify-content: space-between;
		background: linear-gradient(90deg, #b4c8de, #c9daea);
		color: #5d7387;
	}
	h2 button {
		color: #222;
	}
	h2 span {
		display: flex;
		gap: 5px;
	}

	/* outline */
	.outline {
		flex: 1;
		min-height: 0;
		display: flex;
		flex-direction: column;
	}
	.filter {
		flex: none;
		box-sizing: border-box;
		height: 22px;
		padding-left: 6px;
		display: flex;
		align-items: center;
		gap: 6px;
		border-bottom: 1px solid #c4c4c4;
	}
	.filter .pick {
		width: 81px;
	}
	.filter .pick select {
		font-size: 10px;
	}
	.filter input {
		width: 124px;
		height: 14px;
		margin-left: 3px;
		background: #fff;
	}
	.tree-tools {
		flex: none;
		height: 20px;
		padding-left: 8px;
		display: flex;
		align-items: center;
		gap: 6px;
	}
	.tree-box,
	.details-box {
		flex: 1;
		min-height: 0;
		display: flex;
		overflow: hidden;
		background: #fff;
	}
	.tree {
		flex: 1;
		height: 318px;
		margin: 0;
		padding: 0;
		list-style: none;
		display: grid;
		grid-auto-rows: 1fr;
		font: 9px/13px 'DejaVu Sans Condensed', 'Open Sans', sans-serif;
	}
	.tree li {
		display: flex;
		align-items: center;
		min-height: 0;
		white-space: nowrap;
	}
	.tree .icon {
		width: 14px;
		height: 14px;
		margin-right: 4px;
	}
	.tree span {
		color: #3c3c3c;
	}
	.tree .bold {
		font-family: 'Open Sans', sans-serif;
		font-size: 10px;
		font-weight: bold;
		color: #222;
	}
	.tree .selected {
		background: #ececec;
	}
	.guide {
		flex: none;
		width: 18px;
		height: 100%;
		margin-right: 5px;
		display: flex;
		align-items: center;
		justify-content: center;
		background: no-repeat 9px 0 / 1px 100%;
	}
	.guide.line {
		background-image: linear-gradient(#c4c4c4, #c4c4c4);
	}
	.guide.own {
		margin-right: 0;
		background-position: 9px 0, 9px 50%;
		background-size: 1px 50%, 9px 1px;
		background-image: none, linear-gradient(#c4c4c4, #c4c4c4);
	}
	.guide.own.up {
		background-image: linear-gradient(#c4c4c4, #c4c4c4), linear-gradient(#c4c4c4, #c4c4c4);
	}
	.guide.own.line {
		background-size: 1px 100%, 9px 1px;
	}
	.box {
		width: 9px;
		height: 9px;
		display: block;
	}
	.mark {
		width: 8px;
		height: 14px;
		margin: 0 1px 0 2px;
	}
	.scroll {
		flex: none;
		width: 14px;
		display: flex;
		flex-direction: column;
		align-items: center;
		background: #f0f0f0;
	}
	.scroll svg {
		width: 6px;
		height: 4px;
		margin: 6px 0;
	}
	.thumb {
		box-sizing: border-box;
		width: 13px;
		height: 250px;
		margin: 11px 0 auto;
		border: 1px solid #b2b2b2;
		background:
			repeating-linear-gradient(#777 0 1px, transparent 1px 3px) center / 5px 7px no-repeat,
			linear-gradient(90deg, #f2f2f2, #cdcdcd);
	}

	/* details */
	.details {
		flex: 0 0 195px;
		min-height: 0;
		display: flex;
		flex-direction: column;
	}
	.details h2 {
		background: linear-gradient(90deg, #98b7da, #a9c4e2);
		color: #e6f0fa;
	}
	.details h2 button {
		color: #dbe8f5;
	}
	.details table {
		width: 308px;
		height: fit-content;
		border-collapse: collapse;
		table-layout: fixed;
	}
	.gutter-col {
		width: 10px;
	}
	.name-col {
		width: 129px;
	}
	.details tr {
		height: 15px;
	}
	.details tr:nth-child(even) {
		height: 16px;
	}
	.details td,
	.details th {
		box-sizing: border-box;
		padding: 0 3px;
		border-bottom: 1px solid #b4b4b4;
		border-right: 1px solid #b4b4b4;
		line-height: 14px;
		text-align: left;
	}
	.details th {
		color: #222;
		font-weight: 600;
	}
	.details .gutter {
		padding: 0;
		border-bottom: none;
	}
	.details .dim {
		background: #e4e4df;
	}
	.details label {
		display: flex;
		align-items: center;
		gap: 4px;
	}
	.details input {
		appearance: none;
		box-sizing: border-box;
		width: 10px;
		height: 10px;
		border: 1px solid #c3c3c3;
		background: #fff;
	}
	.details .scroll {
		margin-left: 1px;
	}
	.blue .thumb {
		flex: 1;
		height: auto;
		margin: 41px 0 0;
		border-color: #3c7fb1;
		border-bottom: none;
		background:
			repeating-linear-gradient(#245 0 1px, transparent 1px 3px) 50% 98px / 5px 7px no-repeat,
			linear-gradient(90deg, #b5e1f5, #5fb4df);
	}

	/* graphics */
	.scene {
		flex: 1;
		min-height: 0;
		width: 100%;
		display: block;
		border-top: 1px solid #7a8796;
		box-sizing: border-box;
	}
	.ruler-text {
		font-size: 11px;
		fill: #222;
	}
	.brand {
		font: 600 22px 'Open Sans', sans-serif;
		fill: #eaf5ff;
	}
	.release {
		font-size: 13px;
		fill: #d5e6fb;
	}
	.axis {
		font: 11px 'Liberation Sans', sans-serif;
	}
	.x {
		fill: #d05a4e;
	}
	.y {
		fill: #5f8577;
	}
	.z {
		fill: #303a86;
	}
	.tabs {
		flex: none;
		height: 14px;
		display: flex;
		align-items: stretch;
		border: solid #555;
		border-width: 1px 0;
		margin-bottom: 4px;
	}
	.tabs svg {
		width: 10px;
		height: 14px;
	}
	.tabs .active {
		background: #fff;
		color: #111;
		font-weight: 600;
	}
	.bottom {
		flex: 0 0 112px;
		display: grid;
		grid-template-columns: 595px 1fr;
		gap: 5px;
	}
	.messages,
	.tabular {
		min-width: 0;
		background: #9e9e9e;
	}
	.messages table {
		width: 100%;
		border-collapse: collapse;
		table-layout: fixed;
		background: #fff;
	}
	.messages th,
	.messages td {
		box-sizing: border-box;
		height: 15px;
		padding: 0 3px;
		border: solid #b4b4b4;
		border-width: 0 1px 1px 0;
		font-weight: 400;
		line-height: 14px;
		text-align: left;
		white-space: nowrap;
		overflow: hidden;
	}
	.messages th {
		background: #f0f0f0;
	}
	.messages thead {
		border-top: 1px solid #666;
	}
	.messages th:first-child {
		width: 44px;
	}
	.messages th:last-child {
		width: 150px;
	}
</style>
